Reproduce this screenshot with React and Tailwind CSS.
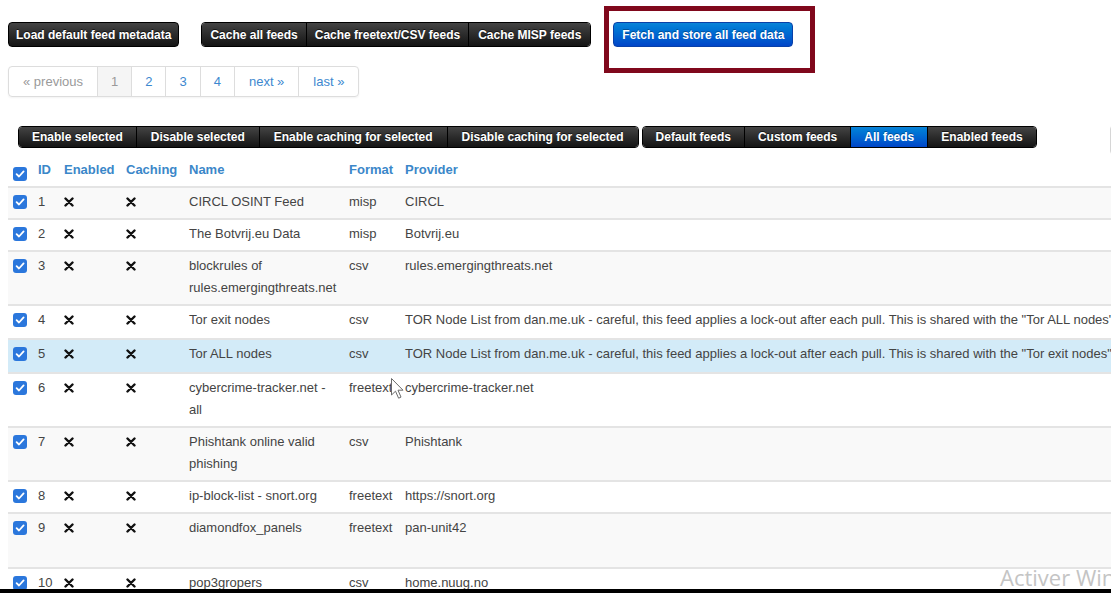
import { useState } from "react";

const FEEDS = [
  { id: 1, name: "CIRCL OSINT Feed", format: "misp", provider: "CIRCL", h: "h-[32px]" },
  { id: 2, name: "The Botvrij.eu Data", format: "misp", provider: "Botvrij.eu", h: "h-[32px]" },
  { id: 3, name: "blockrules of rules.emergingthreats.net", format: "csv", provider: "rules.emergingthreats.net", h: "h-[54px]" },
  {
    id: 4,
    name: "Tor exit nodes",
    format: "csv",
    provider:
      'TOR Node List from dan.me.uk - careful, this feed applies a lock-out after each pull. This is shared with the "Tor ALL nodes" feed.',
    h: "h-[34px]",
  },
  {
    id: 5,
    name: "Tor ALL nodes",
    format: "csv",
    provider:
      'TOR Node List from dan.me.uk - careful, this feed applies a lock-out after each pull. This is shared with the "Tor exit nodes" feed.',
    h: "h-[34px]",
    active: true,
  },
  { id: 6, name: "cybercrime-tracker.net - all", format: "freetext", provider: "cybercrime-tracker.net", h: "h-[54px]" },
  { id: 7, name: "Phishtank online valid phishing", format: "csv", provider: "Phishtank", h: "h-[54px]" },
  { id: 8, name: "ip-block-list - snort.org", format: "freetext", provider: "https://snort.org", h: "h-[32px]" },
  { id: 9, name: "diamondfox_panels", format: "freetext", provider: "pan-unit42", h: "h-[55px]" },
  { id: 10, name: "pop3gropers", format: "csv", provider: "home.nuug.no", h: "h-[54px]" },
];

function Check() {
  return (
    <span className="flex w-[14px] h-[14px] rounded-[3px] bg-[#2b77dc] items-center justify-center">
      <svg width="10" height="10" viewBox="0 0 10 10">
        <path d="M1.6 5.2 L4 7.5 L8.6 2.4" fill="none" stroke="#fff" strokeWidth="1.8" strokeLinecap="round" strokeLinejoin="round" />
      </svg>
    </span>
  );
}

function Cross() {
  return (
    <svg width="10" height="10" viewBox="0 0 10 10">
      <path d="M1.5 1.5 L8.5 8.5 M8.5 1.5 L1.5 8.5" stroke="#111" strokeWidth="2.4" strokeLinecap="round" />
    </svg>
  );
}

const darkBtn =
  "shrink-0 whitespace-nowrap bg-linear-to-b from-[#444444] to-[#151515] text-white font-bold text-[12px] [text-shadow:0_-1px_0_rgba(0,0,0,0.6)]";
const blueBtn =
  "shrink-0 whitespace-nowrap bg-linear-to-b from-[#0a84d8] to-[#0045c8] text-white font-bold text-[12px] [text-shadow:0_-1px_0_rgba(0,0,0,0.3)]";

export default function App() {
  const [filter, setFilter] = useState("all");

  return (
    <div className="relative w-[1111px] h-[593px] overflow-hidden bg-white font-['Liberation_Sans',Arial,sans-serif] flex flex-col">
      <div className="flex-1 overflow-hidden px-[8px] pt-[22px]">
        {/* top actions */}
        <div className="flex items-center">
          <button className={`${darkBtn} h-[25px] px-[7px] rounded-[4px] border border-black`}>
            Load default feed metadata
          </button>
          <div className="flex shrink-0 ml-[22px] rounded-[4px] border border-black overflow-hidden">
            <button className={`${darkBtn} h-[23px] px-[8px]`}>Cache all feeds</button>
            <button className={`${darkBtn} h-[23px] px-[8px] border-l border-[#000]`}>Cache freetext/CSV feeds</button>
            <button className={`${darkBtn} h-[23px] px-[9px] border-l border-[#000]`}>Cache MISP feeds</button>
          </div>
          <button className={`${blueBtn} ml-[22px] h-[25px] px-[8px] rounded-[4px] border border-[#0840a8]`}>
            Fetch and store all feed data
          </button>
        </div>

        {/* pagination */}
        <div className="mt-[19px] flex w-max rounded-[4px] border border-[#dddddd] shadow-[0_1px_2px_rgba(0,0,0,0.05)] text-[13px] h-[31px] overflow-hidden">
          <span className="flex items-center px-[14px] text-[#9a9a9a]">« previous</span>
          <span className="flex items-center px-[13px] border-l border-[#dddddd] bg-[#f5f5f5] text-[#9a9a9a]">1</span>
          {["2", "3", "4"].map((p) => (
            <span key={p} className="flex items-center px-[13px] border-l border-[#dddddd] text-[#3d88cf]">
              {p}
            </span>
          ))}
          <span className="flex items-center px-[14px] border-l border-[#dddddd] text-[#3d88cf]">next »</span>
          <span className="flex items-center px-[14px] border-l border-[#dddddd] text-[#3d88cf]">last »</span>
        </div>

        {/* table toolbar */}
        <div className="mt-[28px] ml-[10px] flex items-start w-[1300px]">
          <div className="flex shrink-0 mt-[1px] rounded-[4px] border border-black overflow-hidden">
            <button className={`${darkBtn} h-[20px] px-[13px]`}>Enable selected</button>
            <button className={`${darkBtn} h-[20px] px-[14px] border-l border-[#000]`}>Disable selected</button>
            <button className={`${darkBtn} h-[20px] px-[14px] border-l border-[#000]`}>Enable caching for selected</button>
            <button className={`${darkBtn} h-[20px] px-[14px] border-l border-[#000]`}>Disable caching for selected</button>
          </div>
          <div className="flex shrink-0 mt-[1px] ml-[3px] rounded-[4px] border border-black overflow-hidden">
            {[
              ["default", "Default feeds"],
              ["custom", "Custom feeds"],
              ["all", "All feeds"],
              ["enabled", "Enabled feeds"],
            ].map(([k, label], i) => (
              <button
                key={k}
                onClick={() => setFilter(k)}
                className={`${filter === k ? blueBtn : darkBtn} h-[20px] px-[13px] ${i ? "border-l border-[#000]" : ""}`}
              >
                {label}
              </button>
            ))}
          </div>
          <div className="ml-[73px] shrink-0 w-[200px] h-[30px] rounded-[4px] border border-[#d6d6d6] bg-white" />
        </div>

        {/* table */}
        <div className="mt-[4px] w-[1500px] text-[13px] leading-[22px]">
          <div className="flex h-[27px] font-bold text-[#3b87c9]">
            <div className="w-[25px] pl-[5px] pt-[8px] flex items-start"><Check /></div>
            <div className="w-[26px] pl-[5px]">ID</div>
            <div className="w-[62px] pl-[5px]">Enabled</div>
            <div className="w-[63px] pl-[5px]">Caching</div>
            <div className="w-[160px] pl-[5px]">Name</div>
            <div className="w-[56px] pl-[5px]">Format</div>
            <div className="flex-1 pl-[5px]">Provider</div>
          </div>
          {FEEDS.map((f, i) => (
            <div
              key={f.id}
              className={`flex ${f.h} border-t-2 border-[#e4e4e4] pt-[3px] text-[#444444] ${
                f.active ? "bg-[#d3ebf8]" : i % 2 === 0 ? "bg-[#f9f9f9]" : "bg-white"
              }`}
            >
              <div className="w-[25px] pl-[5px] pt-[4px] flex items-start"><Check /></div>
              <div className="w-[26px] pl-[5px]">{f.id}</div>
              <div className="w-[62px] pl-[5px] h-[22px] flex items-center"><Cross /></div>
              <div className="w-[63px] pl-[5px] h-[22px] flex items-center"><Cross /></div>
              <div className="w-[160px] pl-[5px] pr-[5px]">{f.name}</div>
              <div className="w-[56px] pl-[5px]">{f.format}</div>
              <div className="flex-1 pl-[5px] whitespace-nowrap">{f.provider}</div>
            </div>
          ))}
        </div>
      </div>

      <div className="h-[4px] bg-black shrink-0" />

      {/* screenshot annotations */}
      <div className="absolute left-[604px] top-[6px] w-[211px] h-[67px] border-[5px] border-[#80081c]" />
      <svg className="absolute left-[390px] top-[377px]" width="16" height="24" viewBox="0 0 16 24">
        <path d="M1.5 1.5 L1.5 18 L5.5 14.2 L8.6 21.2 L11 20.1 L8 13.2 L13 13.2 Z" fill="#fff" stroke="#6b6b6b" strokeWidth="1" strokeLinejoin="round" />
      </svg>
      <div className="absolute left-[1000px] top-[561px] text-[22px] text-[#c4c4c4] font-['Open_Sans',sans-serif] whitespace-nowrap">
        Activer Windows
      </div>
    </div>
  );
}
